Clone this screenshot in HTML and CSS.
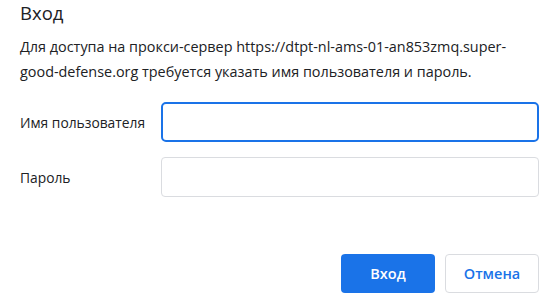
FILE: index.html
```html
<!DOCTYPE html>
<html lang="ru">
<head>
<meta charset="utf-8">
<link rel="stylesheet" href="styles.css">
</head>
<body>
<div class="dialog">
  <h1 class="title">Вход</h1>
  <p class="message">Для доступа на прокси-сервер https://dtpt-nl-ams-01-an853zmq.super-good-defense.org требуется указать имя пользователя и пароль.</p>
  <div class="form">
    <label class="label" for="user">Имя пользователя</label>
    <input class="field field-focus" id="user" type="text">
    <label class="label" for="pass">Пароль</label>
    <input class="field" id="pass" type="password">
  </div>
  <div class="actions">
    <button class="btn btn-primary">Вход</button>
    <button class="btn btn-secondary">Отмена</button>
  </div>
</div>
</body>
</html>
```
FILE: styles.css
```css
html, body {
  margin: 0;
  padding: 0;
  background: #ffffff;
}
body {
  font-family: "Open Sans", "Noto Sans", sans-serif;
  color: #202124;
  width: 550px;
  height: 303px;
  overflow: hidden;
}
.dialog {
  padding: 0 11px 0 20px;
  display: flex;
  flex-direction: column;
}
.title {
  margin: 0;
  font-size: 18.5px;
  font-weight: 400;
  line-height: 26px;
  color: #202124;
}
.message {
  margin: 8px 0 0 0;
  font-size: 14.4px;
  line-height: 25px;
  color: #202124;
  width: 500px;
}
.form {
  margin-top: 18px;
  display: grid;
  grid-template-columns: 141px 378px;
  row-gap: 15px;
  align-items: center;
}
.label {
  font-size: 13.8px;
  color: #202124;
}
.field {
  box-sizing: border-box;
  height: 40px;
  width: 378px;
  border: 1px solid #dadce0;
  border-radius: 4px;
  outline: none;
  margin: 0;
  padding: 0 10px;
  font: inherit;
}
.field-focus {
  border: 2px solid #1a73e8;
  border-radius: 5px;
}
.actions {
  margin-top: 57px;
  display: flex;
  justify-content: flex-end;
  gap: 10px;
}
.btn {
  box-sizing: border-box;
  width: 94px;
  height: 39px;
  border-radius: 4px;
  font-family: "Open Sans", "Noto Sans", sans-serif;
  font-size: 14.5px;
  font-weight: 600;
  margin: 0;
  padding: 0;
}
.btn-primary {
  background: #1a73e8;
  color: #ffffff;
  border: none;
}
.btn-secondary {
  background: #ffffff;
  color: #1a73e8;
  border: 1px solid #dadce0;
}
```
